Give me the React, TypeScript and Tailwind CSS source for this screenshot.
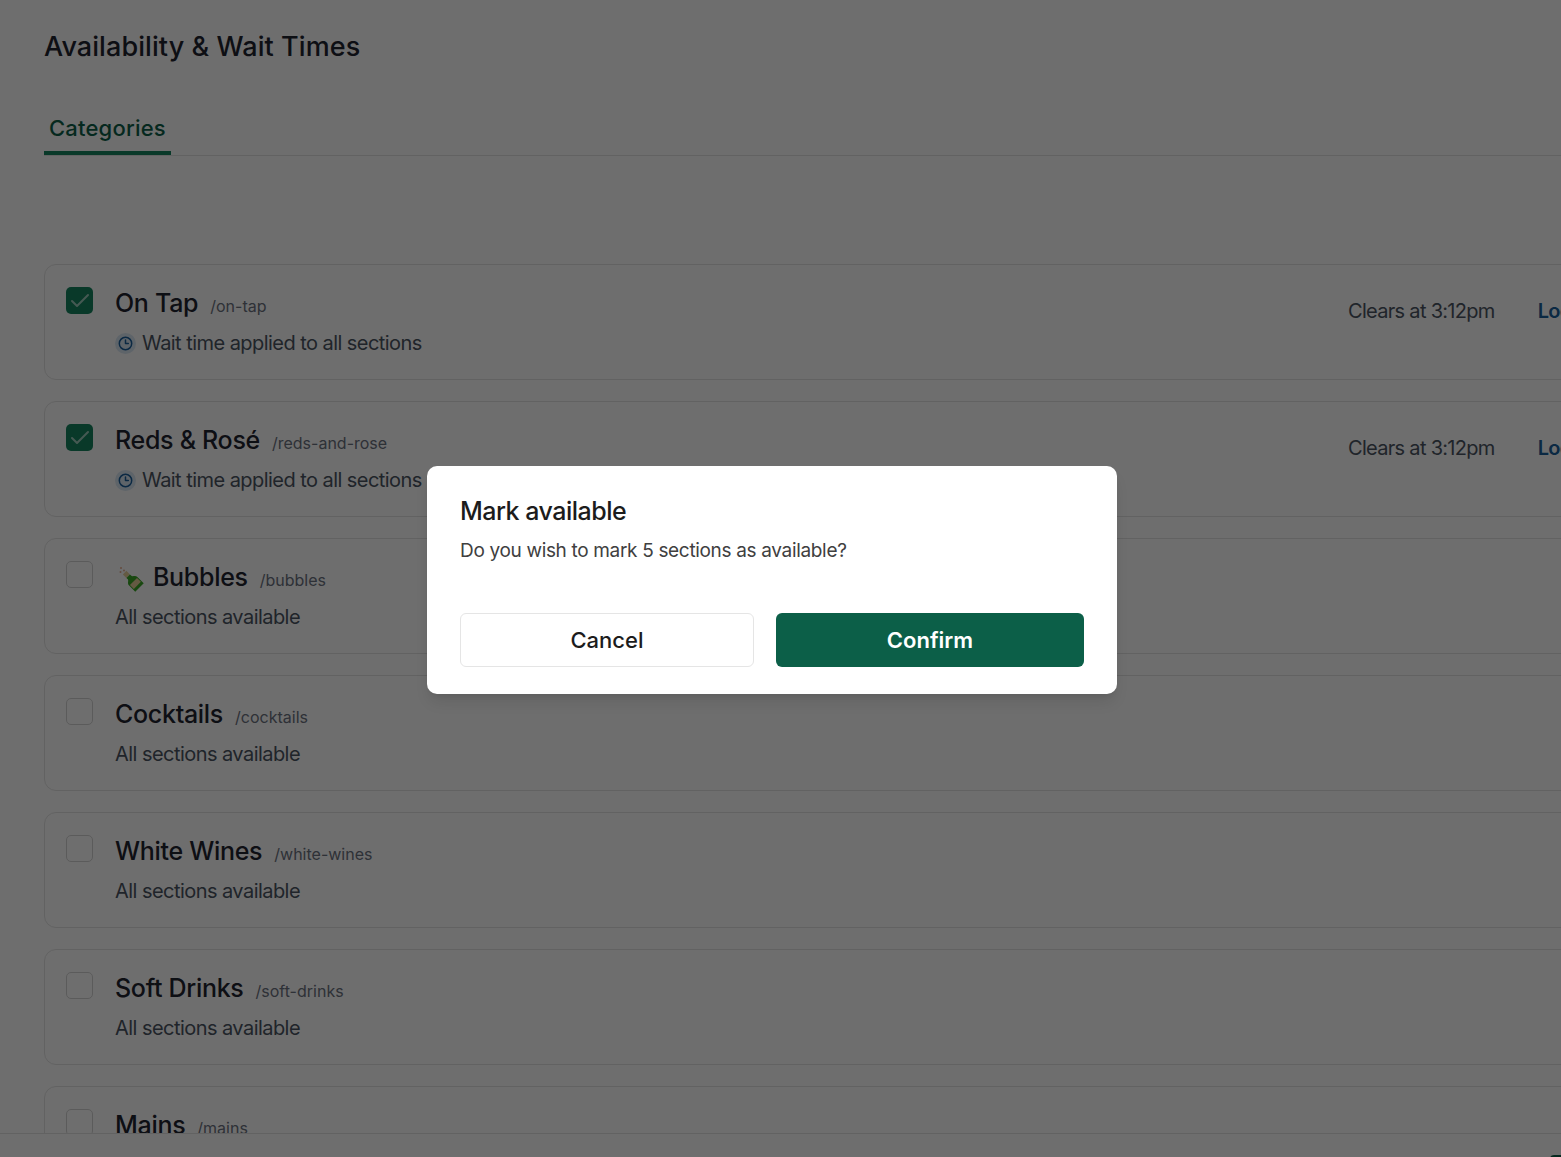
import React from "react";
import { Check } from "lucide-react";

type Row = { name: string; slug: string; status: string; wait?: boolean; checked?: boolean; emoji?: boolean };

const rows: Row[] = [
  { name: "On Tap", slug: "/on-tap", status: "Wait time applied to all sections", wait: true, checked: true },
  { name: "Reds & Rosé", slug: "/reds-and-rose", status: "Wait time applied to all sections", wait: true, checked: true },
  { name: "Bubbles", slug: "/bubbles", status: "All sections available", emoji: true },
  { name: "Cocktails", slug: "/cocktails", status: "All sections available" },
  { name: "White Wines", slug: "/white-wines", status: "All sections available" },
  { name: "Soft Drinks", slug: "/soft-drinks", status: "All sections available" },
  { name: "Mains", slug: "/mains", status: "All sections available" },
];

function Bottle() {
  return (
    <svg width="26" height="26" viewBox="0 0 26 26" className="ml-[3px] mr-[9px] mt-[2px] shrink-0">
      <g transform="rotate(-45 13 13)">
        <rect x="10.500" y="4" width="5" height="5" fill="#e8d09a" />
        <path d="M10.500 9h5v2c0 1.500 3.500 2.500 3.500 5v9H7v-9c0-2.500 3.500-3.500 3.500-5z" fill="#3aa826" />
        <rect x="8" y="16.500" width="10" height="5.500" fill="#e8d09a" />
      </g>
      <circle cx="3" cy="2" r="1" fill="#e8b090" />
      <circle cx="6" cy="4.500" r="1" fill="#e8b090" />
      <circle cx="2.500" cy="6" r="1" fill="#e8b090" />
    </svg>
  );
}

function ClockBadge() {
  return (
    <span className="flex h-[21px] w-[21px] shrink-0 items-center justify-center rounded-full bg-[#dbe8f4]">
      <svg width="15" height="15" viewBox="0 0 15 15" fill="none" stroke="#1a5f9c" strokeWidth="1.5" strokeLinecap="round" strokeLinejoin="round">
        <circle cx="7.500" cy="7.500" r="6.200" />
        <path d="M7.500 4v3.500h2.800" />
      </svg>
    </span>
  );
}

function CategoryRow({ row }: { row: Row }) {
  return (
    <div className="relative flex h-[116px] w-[1600px] shrink-0 rounded-[12px] border border-[#e4e4e4] pl-[21px] pt-[22px]">
      {row.checked ? (
        <span className="flex h-[27px] w-[27px] shrink-0 items-center justify-center rounded-[5px] bg-[#158560]">
          <Check size={24} strokeWidth={2} className="text-white/60" />
        </span>
      ) : (
        <span className="h-[27px] w-[27px] shrink-0 rounded-[5px] border border-[#d4d4d4]" />
      )}
      <div className="ml-[22px] flex flex-col">
        <div className="flex h-[34px] items-center">
          {row.emoji && <Bottle />}
          <span className="mb-[2px] text-[25px] font-medium leading-[34px] tracking-[-0.3px] text-[#1f2430]">{row.name}</span>
          <span className="ml-[12px] mt-[4px] text-[16px] leading-[24px] text-[#6b7280]">{row.slug}</span>
        </div>
        <div className="mt-[8px] flex h-[28px] items-center text-[20px] leading-[28px] tracking-[-0.55px] text-[#4b5563]">
          {row.wait && <span className="mr-[6px]"><ClockBadge /></span>}
          {row.status}
        </div>
      </div>
      {row.wait && (
        <div className="absolute left-[1303px] top-[32px] flex items-center whitespace-nowrap text-[20px] leading-[28px] tracking-[-0.7px]">
          <span className="text-[#4b5563]">Clears at 3:12pm</span>
          <span className="ml-[43px] font-semibold text-[#1a5f9c]">Lock</span>
        </div>
      )}
    </div>
  );
}

export default function App() {
  return (
    <div className="relative flex h-[1157px] w-full flex-col overflow-hidden bg-white font-['Inter',sans-serif]">
      <main className="h-[1134px] shrink-0 overflow-hidden border-b border-[#e4e4e4]">
        <h1 className="ml-[44px] pt-[28px] text-[27px] font-medium leading-[38px] tracking-[0.08px] text-[#1f2430]">
          Availability &amp; Wait Times
        </h1>
        <div className="ml-[44px] mt-[34px] flex h-[56px] border-b border-[#e4e4e4]">
          <div className="h-[55px] border-b-[4px] border-[#158560] px-[5px] pt-[13px] text-[22px] font-medium leading-[30px] tracking-[0.2px] text-[#0d6049]">
            Categories
          </div>
        </div>
        <div className="ml-[44px] mt-[108px] flex flex-col gap-[21px]">
          {rows.map((r) => (
            <CategoryRow key={r.slug} row={r} />
          ))}
        </div>
      </main>
      <footer className="flex h-[23px] justify-end pt-[21px]">
        <span className="h-[20px] w-[11px] rounded-tl-[4px] bg-[#0d6049]" />
      </footer>

      <div className="absolute inset-0 flex items-center justify-center bg-black/[0.57] pr-[17px] pt-[3px]">
        <div className="flex h-[228px] w-[690px] flex-col rounded-[10px] bg-white px-[33px] pt-[28px] shadow-lg">
          <h2 className="text-[25px] font-medium leading-[34px] tracking-[-0.5px] text-[#1c1c1c]">Mark available</h2>
          <p className="mt-[10px] text-[19px] leading-[26px] tracking-[-0.33px] text-[#404040]">
            Do you wish to mark 5 sections as available?
          </p>
          <div className="mt-[49px] flex gap-[22px]">
            <button className="h-[54px] w-[294px] rounded-[6px] border border-[#e5e5e5] bg-white pt-[1px] text-[22px] font-medium text-[#1c1c1c]">
              Cancel
            </button>
            <button className="h-[54px] w-[308px] rounded-[6px] bg-[#0c5f48] pt-[1px] text-[22px] font-semibold text-white">
              Confirm
            </button>
          </div>
        </div>
      </div>
    </div>
  );
}
